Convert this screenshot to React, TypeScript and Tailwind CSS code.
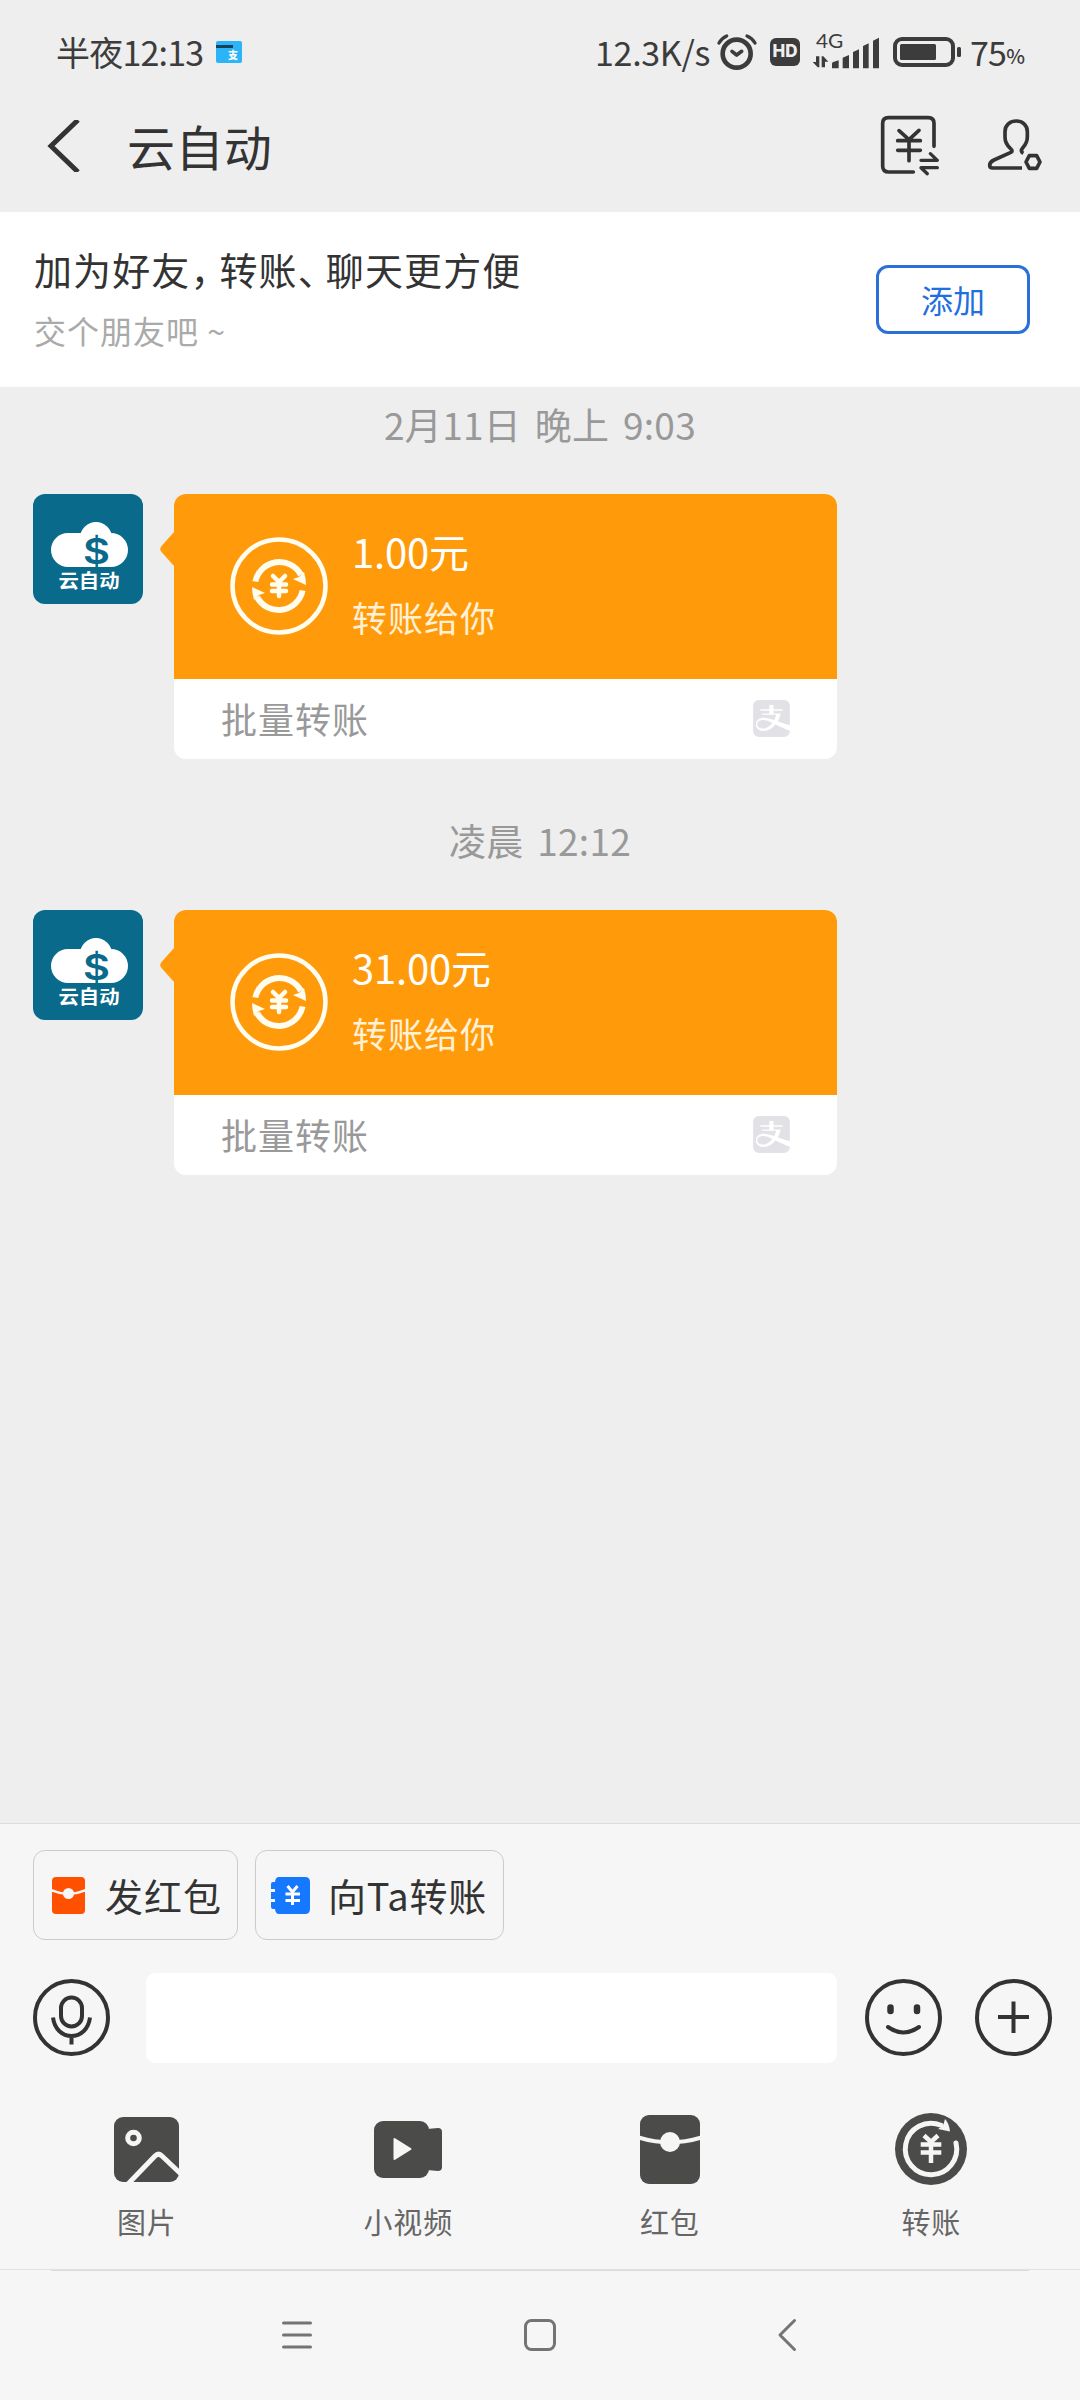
import type { ReactNode } from 'react';
import { SiAlipay } from 'react-icons/si';

const messages = [
  { time: '2月11日 晚上 9:03', amount: '1.00元', note: '转账给你', source: '批量转账' },
  { time: '凌晨 12:12', amount: '31.00元', note: '转账给你', source: '批量转账' },
];

const tools = [
  { label: '图片', icon: <PictureIcon /> },
  { label: '小视频', icon: <VideoIcon /> },
  { label: '红包', icon: <PacketIcon /> },
  { label: '转账', icon: <TransferIcon /> },
];

function ClockIcon() {
  return (
    <svg width="42" height="38" viewBox="0 0 126 114" fill="none" stroke="#3c3c3c" strokeLinecap="round" strokeLinejoin="round">
      <circle cx="62" cy="62" r="42" strokeWidth="14" />
      <path d="M48 55 L62 66 L77 55" strokeWidth="11" />
      <path d="M9 30 Q18 15 32 9 M93 9 Q108 15 117 30" strokeWidth="10" />
    </svg>
  );
}

function SignalIcon() {
  return (
    <svg className="overflow-visible" width="68" height="36" viewBox="0 0 204 108" fill="#3c3c3c">
      <text x="12" y="44" fontSize="56" textLength="82" lengthAdjust="spacingAndGlyphs" fontFamily="Lato, 'Noto Sans', sans-serif">4G</text>
      <path d="M22 70 V103 H17 L2 87 H12 V70 Z M29 103 V70 H34 L49 86 H39 V103 Z" />
      <path d="M60 106 V92 Q60 88 64 87 L80 82 V106 Z" />
      <path d="M92 106 V74 L111 66 V106 Z" />
      <path d="M123 106 V57 L141 49 V106 Z" />
      <path d="M153 106 V39 L170 31 V106 Z" />
      <path d="M183 106 V23 L201 14 V106 Z" />
    </svg>
  );
}

function BillIcon() {
  return (
    <svg width="60" height="62" viewBox="0 0 180 186" fill="none" stroke="#333" strokeWidth="11" strokeLinecap="round" strokeLinejoin="round">
      <path d="M100 171 H26 Q8 171 8 154 V25 Q8 8 25 8 H145 Q162 8 162 25 V94" />
      <path d="M57 47 L87 74 L117 46 M87 74 V137 M53 77 H121 M53 106 H121" />
      <path d="M123 136 H172 L151 116 M172 158 H123 L142 176" strokeWidth="10" />
    </svg>
  );
}

function FriendIcon() {
  return (
    <svg width="57" height="57" viewBox="0 0 171 171" fill="none" stroke="#333" strokeWidth="11" strokeLinejoin="round">
      <path d="M112 109 C105 105 104 100 110 93 C119 83 124 76 124 60 V44 C124 24 109 12 91 12 C72 12 57 24 57 44 V60 C57 76 62 84 73 94 C80 100 80 104 73 107 L24 129 C13 134 11 139 11 145 Q11 153 20 153 H108" />
      <path d="M120 135 L130 116 H152 L162 135 L152 154 H130 Z" />
    </svg>
  );
}

function Avatar() {
  return (
    <svg className="shrink-0 rounded-xl" width="110" height="110" viewBox="0 0 110 110">
      <rect width="110" height="110" fill="#0a6a8b" />
      <rect x="18" y="39" width="77" height="34" rx="17" fill="#fff" />
      <circle cx="63" cy="44" r="16" fill="#fff" />
      <text x="50" y="70" fontSize="35" fontWeight="600" textLength="27" lengthAdjust="spacingAndGlyphs" fill="#0a6a8b" fontFamily="Inter, sans-serif">$</text>
      <text x="25.500" y="94" fontSize="19" fontWeight="700" textLength="61" lengthAdjust="spacingAndGlyphs" fill="#fff" fontFamily="'Noto Sans CJK SC', sans-serif">云自动</text>
    </svg>
  );
}

function CoinIcon() {
  const arrow = 'M27 -1 L14 -7 L20 -9 L25 -14 Q27 -7 27 -1 Z';
  const arc = 'M-23.6 -4.5 A24.5 24.5 0 0 1 22 -11';
  return (
    <svg width="98" height="98" viewBox="-49 -49 98 98" fill="none" stroke="#fffdf0">
      <circle r="46.5" strokeWidth="4.5" />
      <path d={arc} strokeWidth="6" />
      <path d={arrow} fill="#fffdf0" stroke="none" />
      <g transform="rotate(180)">
        <path d={arc} strokeWidth="6" />
        <path d={arrow} fill="#fffdf0" stroke="none" />
      </g>
      <path d="M-6 -10 L0 -4 L6 -10 M0 -4 V10 M-7 -1.5 H7 M-7 5 H7" strokeWidth="4.5" strokeLinecap="round" />
    </svg>
  );
}

function PictureIcon() {
  return (
    <svg width="65" height="65" viewBox="0 0 65 65" fill="none">
      <rect width="65" height="65" rx="9" fill="#4b4c4a" />
      <circle cx="19.5" cy="21" r="5.8" stroke="#f6f6f6" strokeWidth="5" />
      <path d="M14 67 L41 39 Q44.5 35.5 48 39 L67 57" stroke="#f6f6f6" strokeWidth="5" />
    </svg>
  );
}

function VideoIcon() {
  return (
    <svg width="68" height="57" viewBox="0 0 68 57" fill="#4b4c4a">
      <rect width="55" height="57" rx="9" />
      <path d="M53 8 L64 7 Q68 7 68 11 V46 Q68 50 64 50 L53 49 Z" />
      <path d="M20.5 18 V38 L36.5 28 Z" fill="#f6f6f6" stroke="#f6f6f6" strokeWidth="2" strokeLinejoin="round" />
    </svg>
  );
}

function PacketIcon() {
  return (
    <svg width="60" height="69" viewBox="0 0 60 69" fill="none">
      <rect width="60" height="69" rx="9" fill="#4b4c4a" />
      <path d="M-1 22.5 Q30 32 61 22.5" stroke="#f6f6f6" strokeWidth="4" />
      <circle cx="30" cy="27" r="10" fill="#f6f6f6" />
    </svg>
  );
}

function TransferIcon() {
  return (
    <svg width="72" height="72" viewBox="-36 -36 72 72" fill="none" stroke="#f6f6f6">
      <circle r="36" fill="#4b4c4a" stroke="none" />
      <path d="M25 -6 A25.7 25.7 0 1 1 10 -23.7" strokeWidth="5" strokeLinecap="round" />
      <path d="M14 -30 Q18 -26 19 -17.500 L7 -20 L12 -23 Z" fill="#f6f6f6" stroke="none" />
      <path d="M-7 -13.5 L0 -7 L7 -13.5 M0 -7 V14 M-10.3 -4.5 H10.3 M-10.3 3.5 H10.3" strokeWidth="4.5" />
    </svg>
  );
}

function SmallPacketIcon() {
  return (
    <svg width="33" height="37" viewBox="0 0 33 37" fill="none">
      <rect width="33" height="37" rx="4" fill="#ff5000" />
      <path d="M-1 13 Q8 17 16.5 17 Q25 17 34 13" stroke="#f6f6f6" strokeWidth="2.5" />
      <circle cx="16.5" cy="16.5" r="5.5" fill="#f6f6f6" />
    </svg>
  );
}

function SmallTransferIcon() {
  return (
    <svg width="39" height="37" viewBox="0 0 39 37" fill="none">
      <path d="M8 0 H34 Q39 0 39 5 V32 Q39 37 34 37 H8 Q4.5 37 4 32 H2 Q0 32 0 30 V25 H4 V22 H0 V15 H4 V12 H0 V7 Q0 5 2 5 H4 Q4.5 0 8 0 Z" fill="#1677ff" />
      <path d="M16.5 9 L21.5 15 L26.5 9 M21.5 15 V28 M14.5 17 H29 M14.5 23.5 H29" stroke="#fff" strokeWidth="3" />
    </svg>
  );
}

function RoundIcon({ children }: { children: ReactNode }) {
  return (
    <svg className="mb-[2px] shrink-0" width="77" height="77" viewBox="-38.5 -38.5 77 77" fill="none" stroke="#333" strokeWidth="4">
      <circle r="36.5" />
      {children}
    </svg>
  );
}

function Message({ amount, note, source }: { amount: string; note: string; source: string }) {
  return (
    <div className="flex items-start pl-[33px]">
      <Avatar />
      <svg className="ml-[17px] mt-[37px] shrink-0" width="14" height="36" viewBox="0 0 14 36">
        <path d="M14 1 V35 L1.5 21 Q-1 18 1.5 15 Z" fill="#ff9b0a" />
      </svg>
      <div className="h-[265px] w-[663px] overflow-hidden rounded-xl bg-white">
        <div className="flex h-[185px] items-start bg-[#ff9b0a] pl-14 pt-[43px]">
          <CoinIcon />
          <div className="ml-6 -mt-2">
            <div className="text-[40px] leading-[44px] tracking-[-0.2px] text-white">{amount}</div>
            <div className="mt-[22px] text-[35px] leading-[44px] tracking-[1px] text-[#fff0d6]">{note}</div>
          </div>
        </div>
        <div className="flex h-20 items-center justify-between pl-[47px] pr-[47px]">
          <span className="mb-[3px] text-[36px] leading-none tracking-[1px] text-[#999]">{source}</span>
          <SiAlipay className="mb-[2px]" size={37} color="#e2e1e5" />
        </div>
      </div>
    </div>
  );
}

export default function App() {
  return (
    <div className="flex h-[2400px] w-[1080px] flex-col overflow-hidden bg-[#eee] font-['Noto_Sans_CJK_SC',sans-serif] text-[#333]">
      {/* Status bar */}
      <div className="flex h-[84px] items-center pl-14 pt-5 text-[#3c3c3c]">
        <span className="w-[160px] text-[34px] leading-none tracking-[-0.8px]">半夜12:13</span>
        <svg className="overflow-visible" width="26" height="22" viewBox="0 0 26 22">
          <rect width="26" height="22" rx="2" fill="#2bb5f8" />
          <rect y="4" width="17" height="3" fill="#17405a" />
          <text x="12" y="18" fontSize="10" fontWeight="900" fill="#fff">支</text>
        </svg>
        <span className="ml-[353px] w-[120px] text-[34px] leading-none tracking-[-0.3px]">12.3K/s</span>
        <div className="ml-px w-[54px]"><ClockIcon /></div>
        <span className="flex h-7 w-[30px] items-center justify-center rounded-md bg-[#3c3c3c] font-['Inter',sans-serif] text-[17px] font-extrabold text-[#eee]">HD</span>
        <div className="ml-3 -mt-[2px]"><SignalIcon /></div>
        <svg className="ml-[13px]" width="68" height="30" viewBox="0 0 68 30" fill="#3c3c3c">
          <rect x="2" y="2" width="58" height="26" rx="7" fill="none" stroke="#3c3c3c" strokeWidth="4" />
          <rect x="7" y="7" width="36" height="16" rx="1.5" />
          <rect x="64" y="10" width="4" height="10" rx="1.5" />
        </svg>
        <span className="ml-[9px] text-[34px] leading-none tracking-[-0.8px]">75</span>
        <span className="mt-2 text-[20px] font-medium leading-none">%</span>
      </div>

      {/* Title bar */}
      <header className="flex h-32 items-center pb-[5px] pl-[47px]">
        <svg width="34" height="52" viewBox="0 0 34 52" fill="none" stroke="#333" strokeWidth="5">
          <path d="M31 0 L4 26 L31 52" />
        </svg>
        <h1 className="mb-px ml-[46px] text-[48px] leading-none tracking-[0.4px]">云自动</h1>
        <div className="ml-auto flex items-center gap-[46px] pr-[37px]">
          <BillIcon />
          <FriendIcon />
        </div>
      </header>

      {/* Add friend banner */}
      <section className="flex h-[175px] items-center justify-between bg-white pl-[34px] pr-[50px]">
        <div>
          <p className="text-[38px] leading-[44px] tracking-[1.1px]">
            加为好友<span className="pr-[9px] [font-feature-settings:'halt']">，</span>转账<span className="pr-2 [font-feature-settings:'halt']">、</span>聊天更方便
          </p>
          <p className="mt-[17px] text-[32px] leading-[44px] tracking-[1px] text-[#aaa]">交个朋友吧 ~</p>
        </div>
        <button className="h-[69px] w-[154px] rounded-xl border-3 border-[#2a70d8] pb-[2px] text-[32px] leading-none text-[#1f6fe0]">添加</button>
      </section>

      {/* Chat */}
      <main className="flex-1">
        {messages.map((m, i) => (
          <div key={i} className={i === 0 ? 'pt-[15px]' : 'pt-[59px]'}>
            <p className="mb-12 text-center text-[37px] leading-[44px] tracking-[0.3px] text-[#999] [word-spacing:5px]">{m.time}</p>
            <Message amount={m.amount} note={m.note} source={m.source} />
          </div>
        ))}
      </main>

      {/* Input panel */}
      <footer className="h-[446px] border-t border-[#dcdcdc] bg-[#f6f6f6]">
        <div className="flex gap-[17px] pl-[33px] pt-[26px]">
          <button className="flex h-[90px] w-[205px] items-center rounded-xl border border-[#ccc] pl-[18px]">
            <SmallPacketIcon />
            <span className="ml-5 whitespace-nowrap text-[38px] leading-none tracking-[1px]">发红包</span>
          </button>
          <button className="flex h-[90px] w-[249px] items-center rounded-xl border border-[#ccc] pl-[15px]">
            <SmallTransferIcon />
            <span className="ml-[18px] whitespace-nowrap text-[38px] leading-none tracking-[0.8px]">向Ta转账</span>
          </button>
        </div>

        <div className="mt-[33px] flex items-center pl-[33px]">
          <RoundIcon>
            <rect x="-10.5" y="-20" width="21" height="29" rx="10.5" />
            <path d="M-18.5 0 C-17 12 -9 18.5 0 18.5 C9 18.5 17 12 18.5 0 M0 18.5 V27" />
          </RoundIcon>
          <div className="ml-9 mr-7 h-[90px] w-[691px] rounded-[9px] bg-white" />
          <RoundIcon>
            <path d="M-13 -10 V-6.5 M13.5 -10 V-6.5" strokeWidth="6.5" strokeLinecap="round" />
            <path d="M-15.5 9.5 Q0 20.5 15.5 9.5" strokeLinecap="round" />
          </RoundIcon>
          <div className="w-[33px]" />
          <RoundIcon>
            <path d="M-15.5 -0.5 H15.5 M0 -16 V15.5" />
          </RoundIcon>
        </div>

        <div className="flex pl-4 pt-[50px]">
          {tools.map((t) => (
            <div key={t.label} className="flex w-[261.5px] flex-col items-center">
              <div className="flex h-[72px] items-center">{t.icon}</div>
              <span className="mt-[22px] text-[29px] leading-none tracking-[0.8px] text-[#666]">{t.label}</span>
            </div>
          ))}
        </div>
      </footer>

      {/* System navigation */}
      <nav className="h-[131px] border-t border-[#e0e0e0] bg-[#f6f6f6]">
        <div className="mx-[51px] h-px bg-[#dcdcdc]" />
        <svg className="mt-11" width="1080" height="40" viewBox="0 0 1080 40" fill="none" stroke="#747474" strokeWidth="3" strokeLinecap="round">
          <path d="M283.5 8 H310.5 M283.5 20 H310.5 M283.5 32 H310.5" />
          <rect x="525.5" y="5.5" width="29" height="29" rx="6" />
          <path d="M794.5 5.5 L780 20 L794.5 34.5" strokeLinejoin="round" />
        </svg>
      </nav>
    </div>
  );
}
